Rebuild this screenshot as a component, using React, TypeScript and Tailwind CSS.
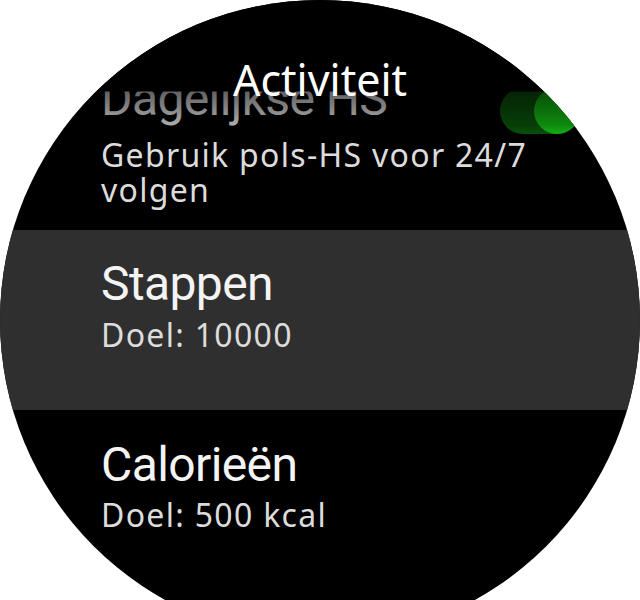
import React from "react";

const sub = "font-['Noto_Sans',sans-serif] text-[32px] leading-[35px] tracking-[1.3px] text-[#dcdcdc]";
const head = "font-['Roboto',sans-serif] text-[48px] leading-[60px] tracking-[-0.6px] text-[#f4f4f4]";

export default function App() {
  return (
    <div className="w-[640px] h-[600px] bg-white overflow-hidden">
      <div className="relative w-[640px] h-[640px] rounded-full bg-black overflow-hidden">
        <div className="flex flex-col pt-[45px]">
          <div className="h-[185px] pt-[24px] pl-[101px] pr-[60px]">
            <div className="flex items-start">
              <div className={`flex-1 ${head}`}>Dagelijkse HS</div>
              <div className="mt-[19px] w-[80px] h-[46px] rounded-full bg-[#0a580a] flex items-center justify-end">
                <div className="w-[46px] h-[46px] rounded-full bg-[#14c414]" />
              </div>
            </div>
            <div className={`mt-[3px] ${sub}`}>Gebruik pols-HS voor 24/7 volgen</div>
          </div>
          <div className="h-[180px] pt-[24px] pl-[101px] pr-[60px] bg-[#2f2f2f]">
            <div className={head}>Stappen</div>
            <div className={`mt-[3px] ${sub}`}>Doel: 10000</div>
          </div>
          <div className="h-[180px] pt-[25px] pl-[101px] pr-[60px]">
            <div className={head}>Calorieën</div>
            <div className={`mt-[2px] ${sub}`}>Doel: 500 kcal</div>
          </div>
        </div>
        <div className="absolute top-0 left-0 right-0 h-[140px] bg-[linear-gradient(to_bottom,#000_0px,#000_91px,rgba(0,0,0,0.6)_92px,rgba(0,0,0,0.3)_125px,rgba(0,0,0,0)_138px)]">
          <div className="pt-[55px] text-center font-['Noto_Sans',sans-serif] text-[43px] leading-[50px] text-white">
            Activiteit
          </div>
        </div>
      </div>
    </div>
  );
}
